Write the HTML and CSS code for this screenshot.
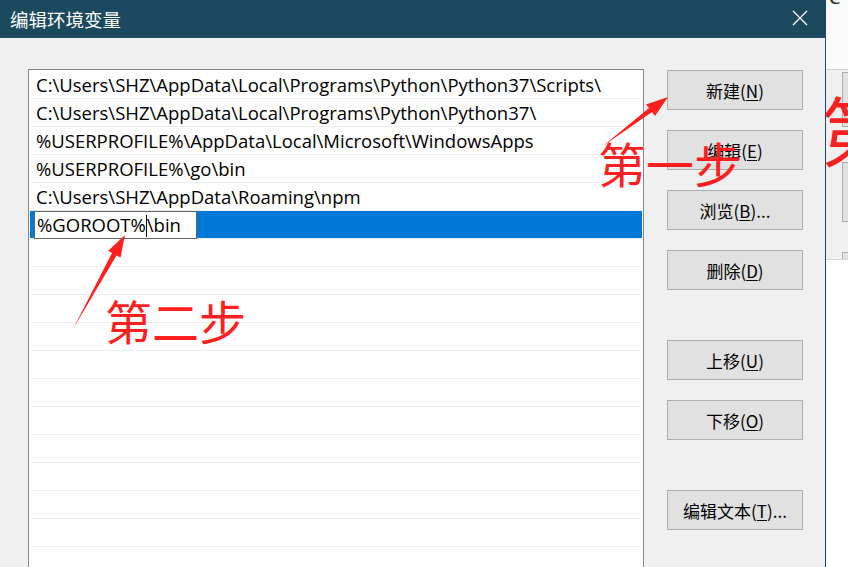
FILE: index.html
```html
<!DOCTYPE html>
<html lang="zh-CN">
<head>
    <meta charset="UTF-8">
    <title>编辑环境变量</title>
    <link rel="stylesheet" href="styles.css">
</head>
<body>
    <div class="screen">
        <div class="dialog">
            <div class="titlebar">
                <span class="title">编辑环境变量</span>
                <svg class="close" width="16" height="16" viewBox="0 0 16 16">
                    <path d="M1 1 L15 15 M15 1 L1 15" stroke="#fff" stroke-width="1.3" fill="none"/>
                </svg>
            </div>
            <div class="content">
                <div class="listbox">
                    <div class="row">C:\Users\SHZ\AppData\Local\Programs\Python\Python37\Scripts\</div>
                    <div class="row">C:\Users\SHZ\AppData\Local\Programs\Python\Python37\</div>
                    <div class="row">%USERPROFILE%\AppData\Local\Microsoft\WindowsApps</div>
                    <div class="row">%USERPROFILE%\go\bin</div>
                    <div class="row">C:\Users\SHZ\AppData\Roaming\npm</div>
                    <div class="row selected">
                        <span class="editbox">%GOROOT%<span class="caret"></span>\bin</span>
                    </div>
                    <div class="row"></div>
                    <div class="row"></div>
                    <div class="row"></div>
                    <div class="row"></div>
                    <div class="row"></div>
                    <div class="row"></div>
                    <div class="row"></div>
                    <div class="row"></div>
                    <div class="row"></div>
                    <div class="row"></div>
                    <div class="row"></div>
                    <div class="row"></div>
                </div>
                <div class="buttons">
                    <button class="btn">新建(<u>N</u>)</button>
                    <button class="btn">编辑(<u>E</u>)</button>
                    <button class="btn">浏览(<u>B</u>)...</button>
                    <button class="btn">删除(<u>D</u>)</button>
                    <button class="btn spaced">上移(<u>U</u>)</button>
                    <button class="btn">下移(<u>O</u>)</button>
                    <button class="btn spaced">编辑文本(<u>T</u>)...</button>
                </div>
            </div>

            <!-- red annotations drawn over the dialog -->
            <svg class="arrows" width="825" height="567" viewBox="0 0 825 567">
                <polygon fill="#ff1f1f" points="603,146 649,108 646,104.5 668,97 655,116 652,112"/>
                <polygon fill="#ff1f1f" points="73,329 112,253 108,251 125,235 120.5,257.5 116.5,255.5"/>
            </svg>
            <div class="note note-one">第一步</div>
            <div class="note note-two">第二步</div>
        </div>

        <div class="backdrop">
            <div class="backdrop-top"><span class="peek-letter">c</span></div>
            <div class="backdrop-panel">
                <div class="peek-btn peek-btn-a"></div>
                <div class="peek-btn peek-btn-b"></div>
                <div class="peek-btn peek-btn-c"></div>
                <span class="peek-note">第</span>
            </div>
        </div>
    </div>
</body>
</html>
```

FILE: styles.css
```css
* {
    margin: 0;
    padding: 0;
    box-sizing: border-box;
}

body {
    width: 848px;
    height: 567px;
    overflow: hidden;
    background: #fff;
    font-family: 'Open Sans', 'Noto Sans CJK SC', sans-serif;
}

.screen {
    display: flex;
    width: 848px;
    height: 567px;
    overflow: hidden;
}

.dialog {
    position: relative;
    width: 826px;
    height: 567px;
    background: #f0f0f0;
    border-right: 1px solid #1b4a5f;
    flex-shrink: 0;
}

.titlebar {
    height: 38px;
    background: #1b4a5f;
    display: flex;
    align-items: center;
    justify-content: space-between;
    padding: 0 17px 0 10px;
}

.title {
    color: #fff;
    font-family: 'Noto Sans CJK SC', sans-serif;
    font-size: 18.5px;
    line-height: 20px;
    margin-top: -1px;
}

.close {
    display: block;
    margin-top: -3px;
}

.content {
    display: flex;
    align-items: flex-start;
}

.listbox {
    margin: 31px 0 0 28px;
    width: 616px;
    height: 520px;
    background: #fff;
    border: 1px solid #828790;
    border-bottom: none;
    padding: 1px 1px 0;
    overflow: hidden;
}

.row {
    height: 28px;
    margin: 0 1px;
    border-bottom: 1px solid #eeeeee;
    padding-left: 5px;
    font-size: 18.5px;
    line-height: 27px;
    color: #000;
    white-space: nowrap;
}

.row.selected {
    background: #0078d7;
    margin: 0;
    padding-left: 4px;
}

.editbox {
    display: inline-block;
    width: 163px;
    height: 28px;
    background: #fff;
    border: 1px solid #646464;
    padding-left: 2px;
    line-height: 25px;
    vertical-align: top;
}

.caret {
    display: inline-block;
    width: 1px;
    height: 22px;
    background: #000;
    vertical-align: -5px;
}

.buttons {
    display: flex;
    flex-direction: column;
    margin: 32px 0 0 23px;
}

.btn {
    width: 136px;
    height: 40px;
    background: #e1e1e1;
    border: 1px solid #adadad;
    font-family: 'Noto Sans CJK SC', sans-serif;
    font-size: 17px;
    color: #000;
    margin-top: 20px;
}

.btn:first-child {
    margin-top: 0;
}

.btn.spaced {
    margin-top: 50px;
}

.btn u {
    text-underline-offset: 2px;
}

.arrows {
    position: absolute;
    left: 0;
    top: 0;
    pointer-events: none;
}

.note {
    position: absolute;
    color: #ff1f1f;
    font-family: 'Noto Sans CJK SC', sans-serif;
    font-size: 48px;
    line-height: 48px;
    white-space: nowrap;
    pointer-events: none;
}

.note-one {
    left: 598px;
    top: 138px;
}

.note-two {
    left: 105px;
    top: 296px;
    font-size: 47px;
}

.backdrop {
    flex: 1;
    display: flex;
    flex-direction: column;
    background: #fff;
}

.backdrop-top {
    height: 70px;
    background: #fbfbfb;
    border-bottom: 1px solid #d4d4d4;
    overflow: hidden;
}

.peek-letter {
    display: block;
    margin: -18px 0 0 3px;
    font-family: 'Liberation Serif', serif;
    font-size: 26px;
    line-height: 28px;
    color: #333;
}

.backdrop-panel {
    position: relative;
    height: 190px;
    background: #f0f0f0;
    border-bottom: 1px solid #d9d9d9;
    overflow: hidden;
}

.peek-btn {
    position: absolute;
    left: 16px;
    width: 40px;
    background: #e1e1e1;
    border: 1px solid #adadad;
}

.peek-btn-a {
    top: 2px;
    height: 55px;
}

.peek-btn-b {
    top: 92px;
    height: 60px;
}

.peek-btn-c {
    top: 182px;
    height: 20px;
}

.peek-note {
    position: absolute;
    left: -6px;
    top: 20px;
    color: #ff1f1f;
    font-family: 'Noto Sans CJK SC', sans-serif;
    font-size: 76px;
    line-height: 76px;
}
```
